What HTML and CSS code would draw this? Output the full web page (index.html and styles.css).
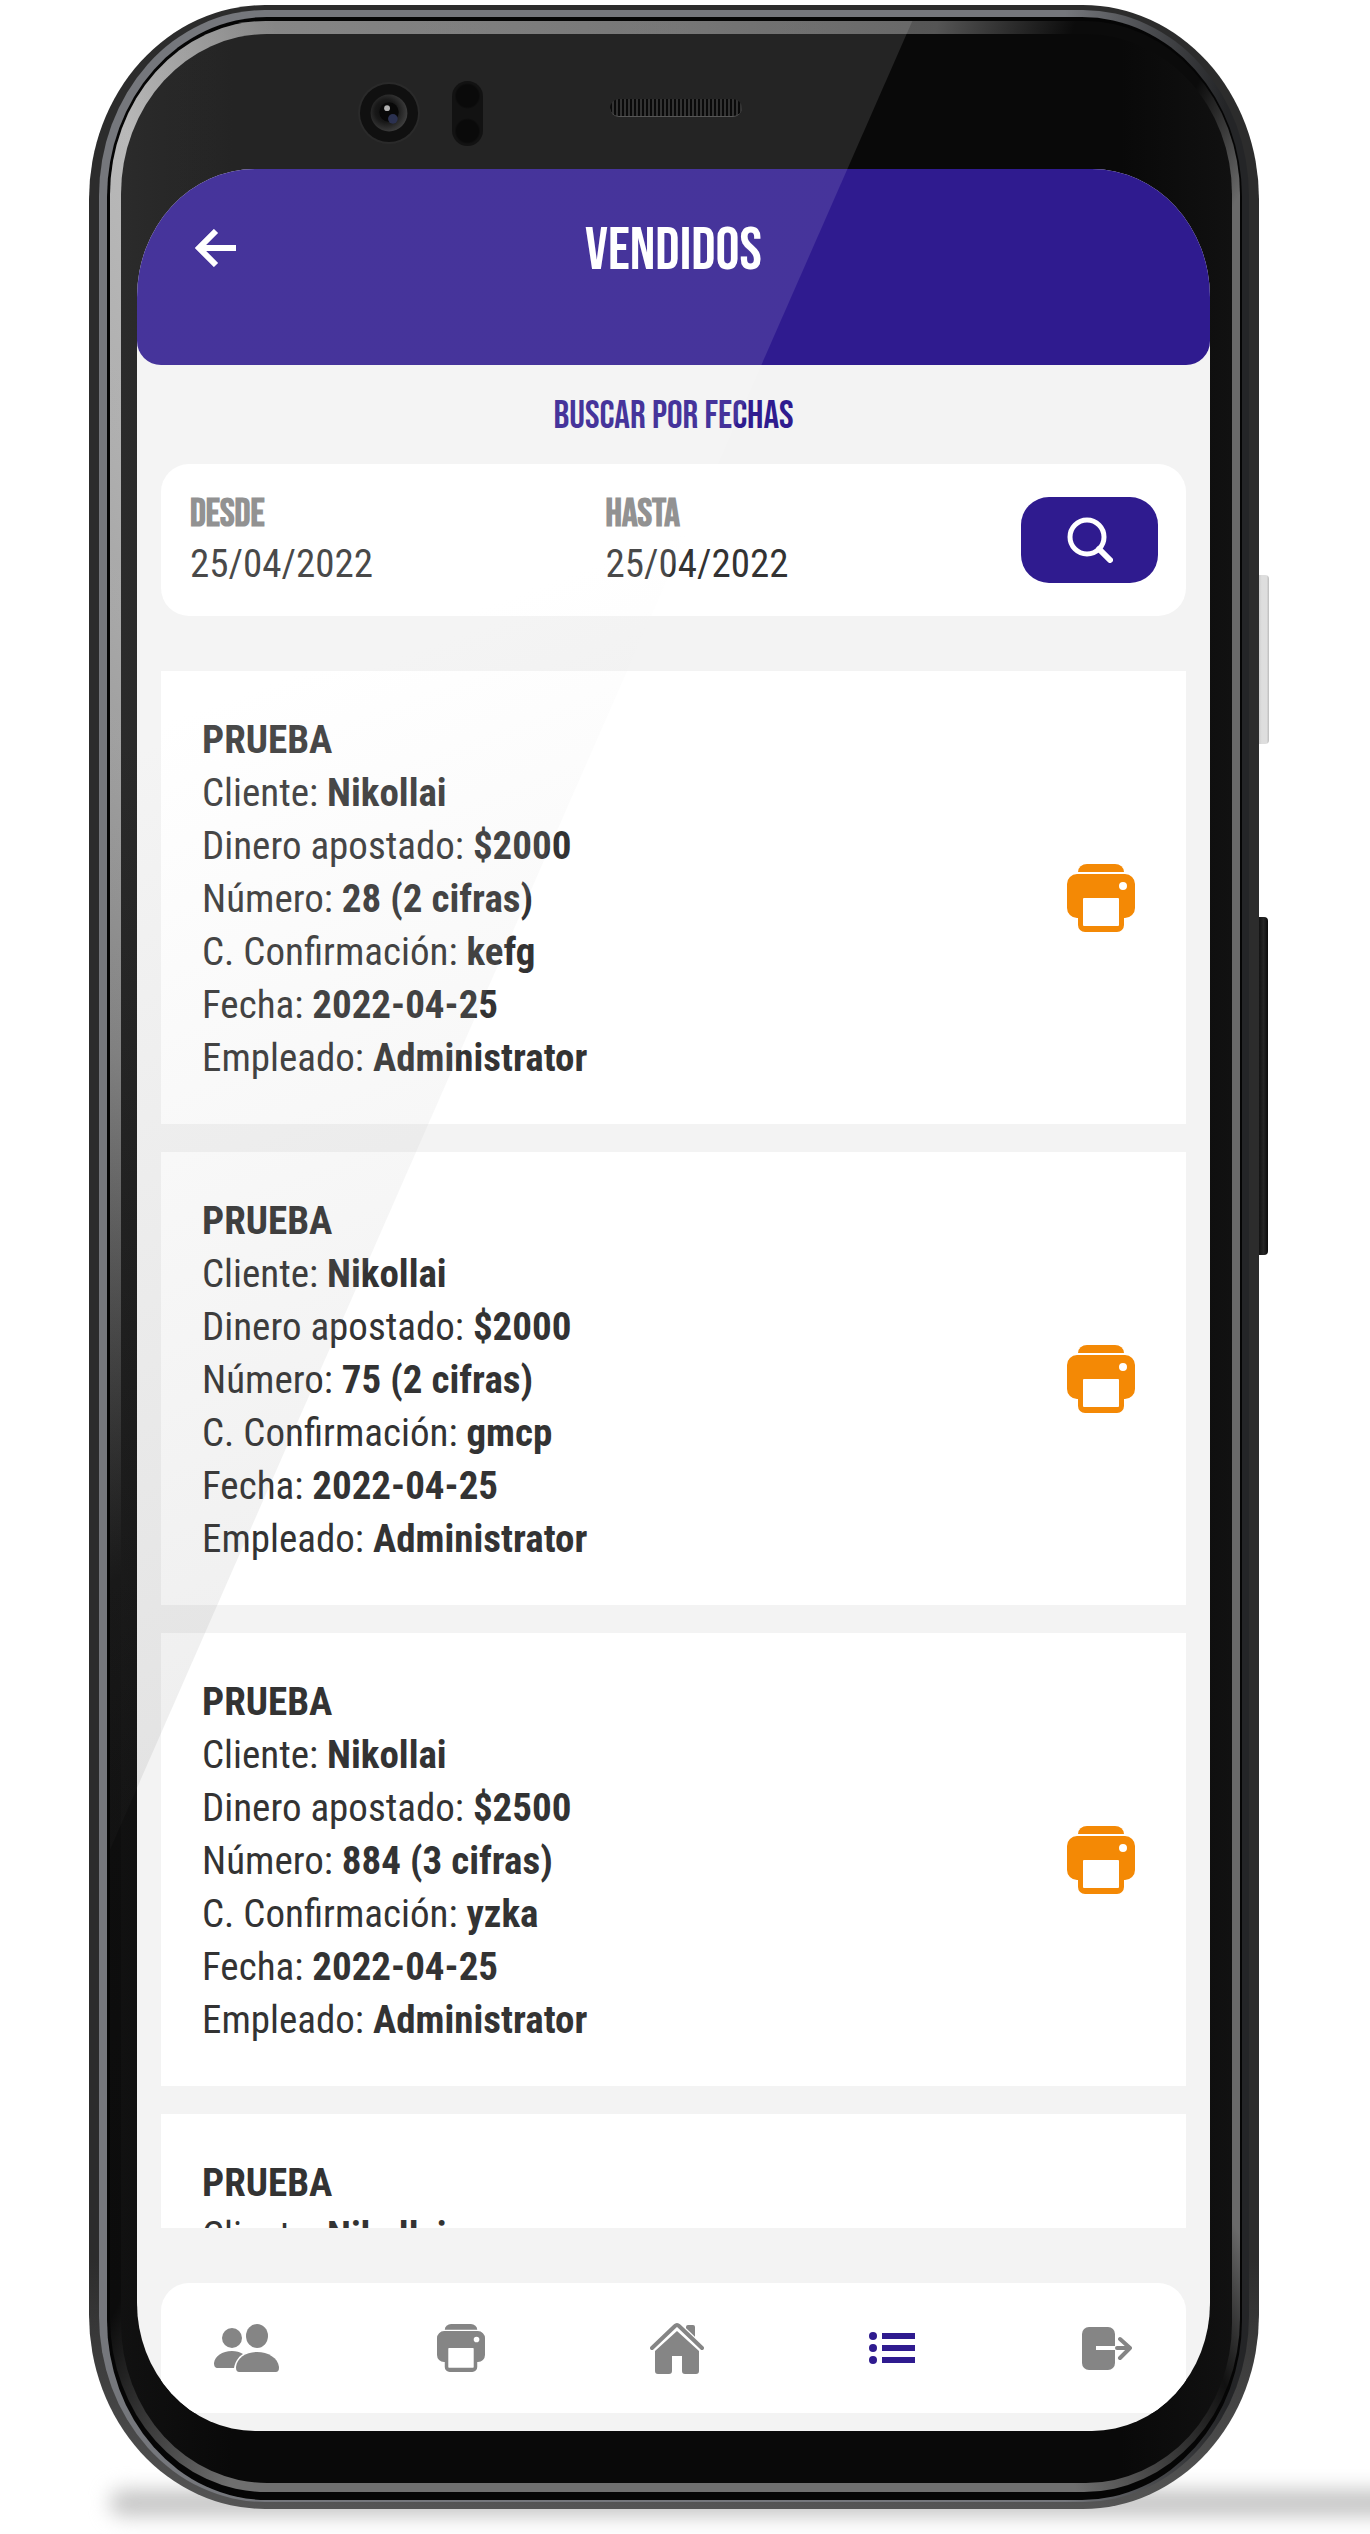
FILE: index.html
```
<!DOCTYPE html>
<html lang="es">
<head>
<meta charset="utf-8">
<meta name="viewport" content="width=device-width, initial-scale=1">
<title>Vendidos</title>
<link rel="stylesheet" href="styles.css">
</head>
<body>
<svg class="sprite" aria-hidden="true">
  <symbol id="printer" viewBox="0 0 68 68">
    <path d="M11 8a9 8 0 0 1 9-8h28a9 8 0 0 1 9 8z"/>
    <path fill-rule="evenodd" d="M10 10h48a10 10 0 0 1 10 10v24a10 10 0 0 1-10 10h-1v7a7 7 0 0 1-7 7H18a7 7 0 0 1-7-7v-7h-1A10 10 0 0 1 0 44V20a10 10 0 0 1 10-10zm46 8a4 4 0 1 0 0 8 4 4 0 0 0 0-8zM17 34a1 1 0 0 0-1 1v26a1 1 0 0 0 1 1h34a1 1 0 0 0 1-1V35a1 1 0 0 0-1-1z"/>
  </symbol>
</svg>
<div class="stage">
  <div class="floor-shadow"></div>
  <div class="phone">
    <span class="side-key side-key-power"></span>
    <span class="side-key side-key-volume"></span>
    <div class="frame" aria-hidden="true">
      <span class="layer edge"></span>
      <span class="layer metal"></span>
      <span class="layer groove"></span>
      <span class="layer bevel"></span>
      <span class="layer glass"></span>
    </div>

    <div class="screen">
      <header class="topbar">
        <button class="back" type="button" aria-label="Volver">
          <svg class="outline" viewBox="0 0 42 38" width="42" height="38" stroke-width="6"><path d="M41 19H5M21 2L4 19l17 17"/></svg>
        </button>
        <h1 class="title">Vendidos</h1>
      </header>

      <main class="content">
        <h2 class="subtitle">Buscar por fechas</h2>
        <form class="search">
          <div class="field">
            <label for="desde">Desde</label>
            <input id="desde" type="text" value="25/04/2022">
          </div>
          <div class="field">
            <label for="hasta">Hasta</label>
            <input id="hasta" type="text" value="25/04/2022">
          </div>
          <button class="search-button" type="button" aria-label="Buscar">
            <svg class="outline" viewBox="0 0 46 46" width="46" height="46"><circle cx="20" cy="20" r="17" stroke-width="5"/><path d="M32 32l11 11" stroke-width="6" stroke-linecap="round"/></svg>
          </button>
        </form>

        <section class="sales" aria-label="Ventas">
          <article class="sale">
            <div class="sale-info">
              <h3>PRUEBA</h3>
              <p>Cliente: <b>Nikollai</b></p>
              <p>Dinero apostado: <b>$2000</b></p>
              <p>Número: <b>28 (2 cifras)</b></p>
              <p>C. Confirmación: <b>kefg</b></p>
              <p>Fecha: <b>2022-04-25</b></p>
              <p>Empleado: <b>Administrator</b></p>
            </div>
            <button class="print" type="button" aria-label="Imprimir"><svg width="68" height="68"><use href="#printer"/></svg></button>
          </article>
          <article class="sale">
            <div class="sale-info">
              <h3>PRUEBA</h3>
              <p>Cliente: <b>Nikollai</b></p>
              <p>Dinero apostado: <b>$2000</b></p>
              <p>Número: <b>75 (2 cifras)</b></p>
              <p>C. Confirmación: <b>gmcp</b></p>
              <p>Fecha: <b>2022-04-25</b></p>
              <p>Empleado: <b>Administrator</b></p>
            </div>
            <button class="print" type="button" aria-label="Imprimir"><svg width="68" height="68"><use href="#printer"/></svg></button>
          </article>
          <article class="sale">
            <div class="sale-info">
              <h3>PRUEBA</h3>
              <p>Cliente: <b>Nikollai</b></p>
              <p>Dinero apostado: <b>$2500</b></p>
              <p>Número: <b>884 (3 cifras)</b></p>
              <p>C. Confirmación: <b>yzka</b></p>
              <p>Fecha: <b>2022-04-25</b></p>
              <p>Empleado: <b>Administrator</b></p>
            </div>
            <button class="print" type="button" aria-label="Imprimir"><svg width="68" height="68"><use href="#printer"/></svg></button>
          </article>
          <article class="sale">
            <div class="sale-info">
              <h3>PRUEBA</h3>
              <p>Cliente: <b>Nikollai</b></p>
            </div>
          </article>
        </section>
      </main>

      <nav class="tabs" aria-label="Principal">
        <a href="#clientes" aria-label="Clientes">
          <svg width="65" height="48" viewBox="0 0 65 48"><circle cx="18" cy="14" r="10"/><ellipse cx="43" cy="12" rx="11" ry="12"/><path d="M4 44c-3 0-4-2-4-5 1-7 8-12 18-12 4 0 8 1 11 3-5 3-8 8-9 14z"/><path d="M26 48c-3 0-4-1-4-5 1-9 10-15 21-15s21 6 22 15c0 4-1 5-4 5z"/></svg>
        </a>
        <a href="#imprimir" aria-label="Imprimir"><svg width="48" height="48"><use href="#printer"/></svg></a>
        <a href="#inicio" aria-label="Inicio">
          <svg width="54" height="51" viewBox="0 0 54 51"><path d="M36 11V4q0-2 2-2h5q2 0 2 2v15z"/><path d="M2 26L25 4q2-2 4 0l23 22" fill="none" stroke="#fff" stroke-width="8"/><path d="M2 25L25 3q2-2 4 0l23 22" fill="none" stroke="currentColor" stroke-width="4" stroke-linecap="round"/><path d="M5 28L27 8l22 20v20q0 3-3 3H35q-3 0-3-3V33H22v15q0 3-3 3H8q-3 0-3-3z"/></svg>
        </a>
        <a class="active" href="#vendidos" aria-label="Vendidos" aria-current="page">
          <svg width="46" height="32" viewBox="0 0 46 32"><circle cx="4" cy="4" r="4"/><circle cx="4" cy="16" r="4"/><circle cx="4" cy="28" r="4"/><path d="M13 1h33v6H13zM13 13h33v6H13zM13 25h33v6H13z"/></svg>
        </a>
        <a href="#salir" aria-label="Salir">
          <svg width="50" height="43" viewBox="0 0 50 43"><rect width="33" height="43" rx="7"/><g fill="none" stroke-width="4" stroke-linecap="round" stroke-linejoin="round"><path stroke="currentColor" d="M35 21h13M38 12l10 9-10 10"/><path stroke="#fff" stroke-linecap="butt" d="M14 21h19"/></g></svg>
        </a>
      </nav>
    </div>

    <div class="reflection"></div>
    <svg class="camera" viewBox="0 0 64 64" aria-hidden="true">
      <defs>
        <radialGradient id="lens" cx=".42" cy=".45" r=".6"><stop offset="0" stop-color="#0a0a0a"/><stop offset=".5" stop-color="#181818"/><stop offset="1" stop-color="#404040"/></radialGradient>
      </defs>
      <circle cx="32" cy="32" r="32" fill="#2a2a2a"/>
      <circle cx="32" cy="32" r="30" fill="#101010"/>
      <circle cx="32" cy="32" r="19" fill="url(#lens)"/>
      <circle cx="32" cy="31" r="10" fill="#080808"/>
      <circle cx="36" cy="38" r="5" fill="#2b3150"/>
      <circle cx="30" cy="27" r="3" fill="#b0b0b0"/>
    </svg>
    <span class="sensor"></span>
    <span class="speaker"></span>
  </div>
</div>
</body>
</html>
```
FILE: styles.css
```
* { box-sizing: border-box; }

body {
  margin: 0;
  background: #fff;
  color: #333;
  font-family: "Roboto Condensed", Roboto, sans-serif;
  font-size: 39px;
}

h1, h2, h3, p { margin: 0; }

button {
  border: 0;
  padding: 0;
  background: none;
  color: inherit;
  cursor: pointer;
}

svg { display: block; fill: currentColor; }

.outline { fill: none; stroke: currentColor; }

.sprite { position: absolute; width: 0; height: 0; }

.stage {
  position: relative;
  height: 100vh;
  padding: 5px 111px 25px 89px;
  overflow: hidden;
}

.floor-shadow {
  position: absolute;
  left: 110px;
  right: -60px;
  bottom: 18px;
  height: 26px;
  border-radius: 50px;
  background: #c4c4c4;
  filter: blur(10px);
}

/* Phone body */
.phone {
  position: relative;
  height: 100%;
  padding: 164px 49px 78px 48px;
}

.frame, .layer { position: absolute; inset: 0; }

.edge {
  border-radius: 176px / 194px;
  background: linear-gradient(#2c2c2c, #2c2c2c 90%, #555);
}

.metal {
  inset: 5px 10px 7px 10px;
  border-radius: 166px / 186px;
  background: linear-gradient(to right, #75777c, #75777c 84%, #242527 98%);
}

.groove {
  inset: 12px 17px 9px 18px;
  border-radius: 160px / 180px;
  background: #050505;
}

.bevel {
  inset: 16px 19px 17px 21px;
  border-radius: 156px / 174px;
  background: conic-gradient(#666, #555 12deg, #0b0b0b 18deg, #0b0b0b 24deg, #6a6a6a 28deg, #6a6a6a 150deg, #111 154deg, #6f6f6f 162deg, #6f6f6f 200deg, #0c0c0c 208deg, #101010 240deg, #777 290deg, #b0b0b0 334deg, #777 342deg, #666);
}

.glass {
  inset: 29px 27px 26px 32px;
  border-radius: 146px / 160px;
  background: linear-gradient(to right, #111, #090909 10%, #090909 90%, #111);
}

.camera {
  position: absolute;
  left: 269px;
  top: 76px;
  width: 62px;
  height: 64px;
}

.sensor {
  position: absolute;
  left: 363px;
  top: 76px;
  width: 31px;
  height: 65px;
  border-radius: 16px;
  background:
    radial-gradient(circle at 50% 23%, #0a0a0a 11px, transparent 13px),
    radial-gradient(circle at 50% 77%, #0a0a0a 11px, transparent 13px),
    #121212;
}

.speaker {
  position: absolute;
  left: 521px;
  top: 94px;
  width: 132px;
  height: 18px;
  border-radius: 9px;
  border-bottom: 1px solid #555;
  background: repeating-linear-gradient(to right, #0a0a0a 0 2px, #333 2px 4px);
}

.side-key {
  position: absolute;
  left: calc(100% - 2px);
  width: 12px;
  border-radius: 0 4px 4px 0;
}

.side-key-power {
  top: 570px;
  height: 169px;
  background: linear-gradient(to right, #c4c4c4, #dedede 40%, #dedede 80%, #bcbcbc);
}

.side-key-volume {
  top: 912px;
  width: 11px;
  height: 338px;
  background: linear-gradient(to right, #0a0a0a, #262626 60%, #0a0a0a);
}

.reflection {
  position: absolute;
  inset: 16px 19px 17px 21px;
  border-radius: 156px / 174px;
  clip-path: polygon(0 0, 71% 0, 0 74%);
  background: linear-gradient(160deg, rgba(255, 255, 255, .11) 25%, rgba(65, 65, 65, .09) 62%);
  pointer-events: none;
}

/* App */
.screen {
  position: relative;
  display: flex;
  flex-direction: column;
  height: 100%;
  padding-bottom: 18px;
  overflow: hidden;
  border-radius: 118px / 128px;
  background: #f3f3f3;
}

.topbar {
  display: grid;
  grid-template-columns: 42px 1fr 42px;
  align-items: start;
  padding: 50px 58px 82px;
  border-radius: 0 0 24px 24px;
  background: #2f1b8f;
  color: #fff;
}

.back { padding: 10px 0; }

.title, .subtitle, .field label {
  font-family: "Bebas Neue", "Roboto Condensed", sans-serif;
}

.title {
  font-size: 60px;
  font-weight: 400;
  line-height: 64px;
  text-align: center;
}

.content {
  display: flex;
  flex: 1;
  flex-direction: column;
  min-height: 0;
  padding: 32px 24px 55px;
}

.subtitle {
  color: #2f1b8f;
  font-size: 39px;
  font-weight: 400;
  line-height: 40px;
  text-align: center;
}

.search {
  display: grid;
  grid-template-columns: 1fr 1fr 137px;
  align-items: center;
  margin: 27px 0 55px;
  padding: 31px 28px 32px 29px;
  border-radius: 28px;
  background: #fff;
}

.field {
  display: flex;
  flex-direction: column;
  gap: 9px;
}

.field label {
  color: #858585;
  font-weight: 700;
  line-height: 40px;
}

.field input {
  width: 90%;
  height: 40px;
  border: 0;
  padding: 0;
  background: none;
  color: inherit;
  font: inherit;
}

.search-button {
  display: grid;
  place-items: center;
  height: 86px;
  border-radius: 28px;
  background: #2f1b8f;
  color: #fff;
}

.sales {
  display: flex;
  flex: 1;
  flex-direction: column;
  gap: 28px;
  min-height: 0;
  overflow: hidden;
}

.sale {
  display: flex;
  flex-shrink: 0;
  align-items: center;
  justify-content: space-between;
  padding: 0 51px 0 41px;
  background: #fff;
}

.sale-info {
  padding: 43px 0 39px;
  line-height: 53px;
}

.sale-info h3 {
  font-size: 39px;
  font-weight: 700;
}

.print { color: #f48905; }

.tabs {
  display: flex;
  align-items: center;
  justify-content: space-between;
  height: 130px;
  margin: 0 24px;
  padding: 0 46px 0 52px;
  border-radius: 28px 28px 0 0;
  background: #fff;
}

.tabs a {
  display: grid;
  place-items: center;
  width: 66px;
  height: 66px;
  color: #858585;
}

.tabs .active { color: #2f1b8f; }
```
